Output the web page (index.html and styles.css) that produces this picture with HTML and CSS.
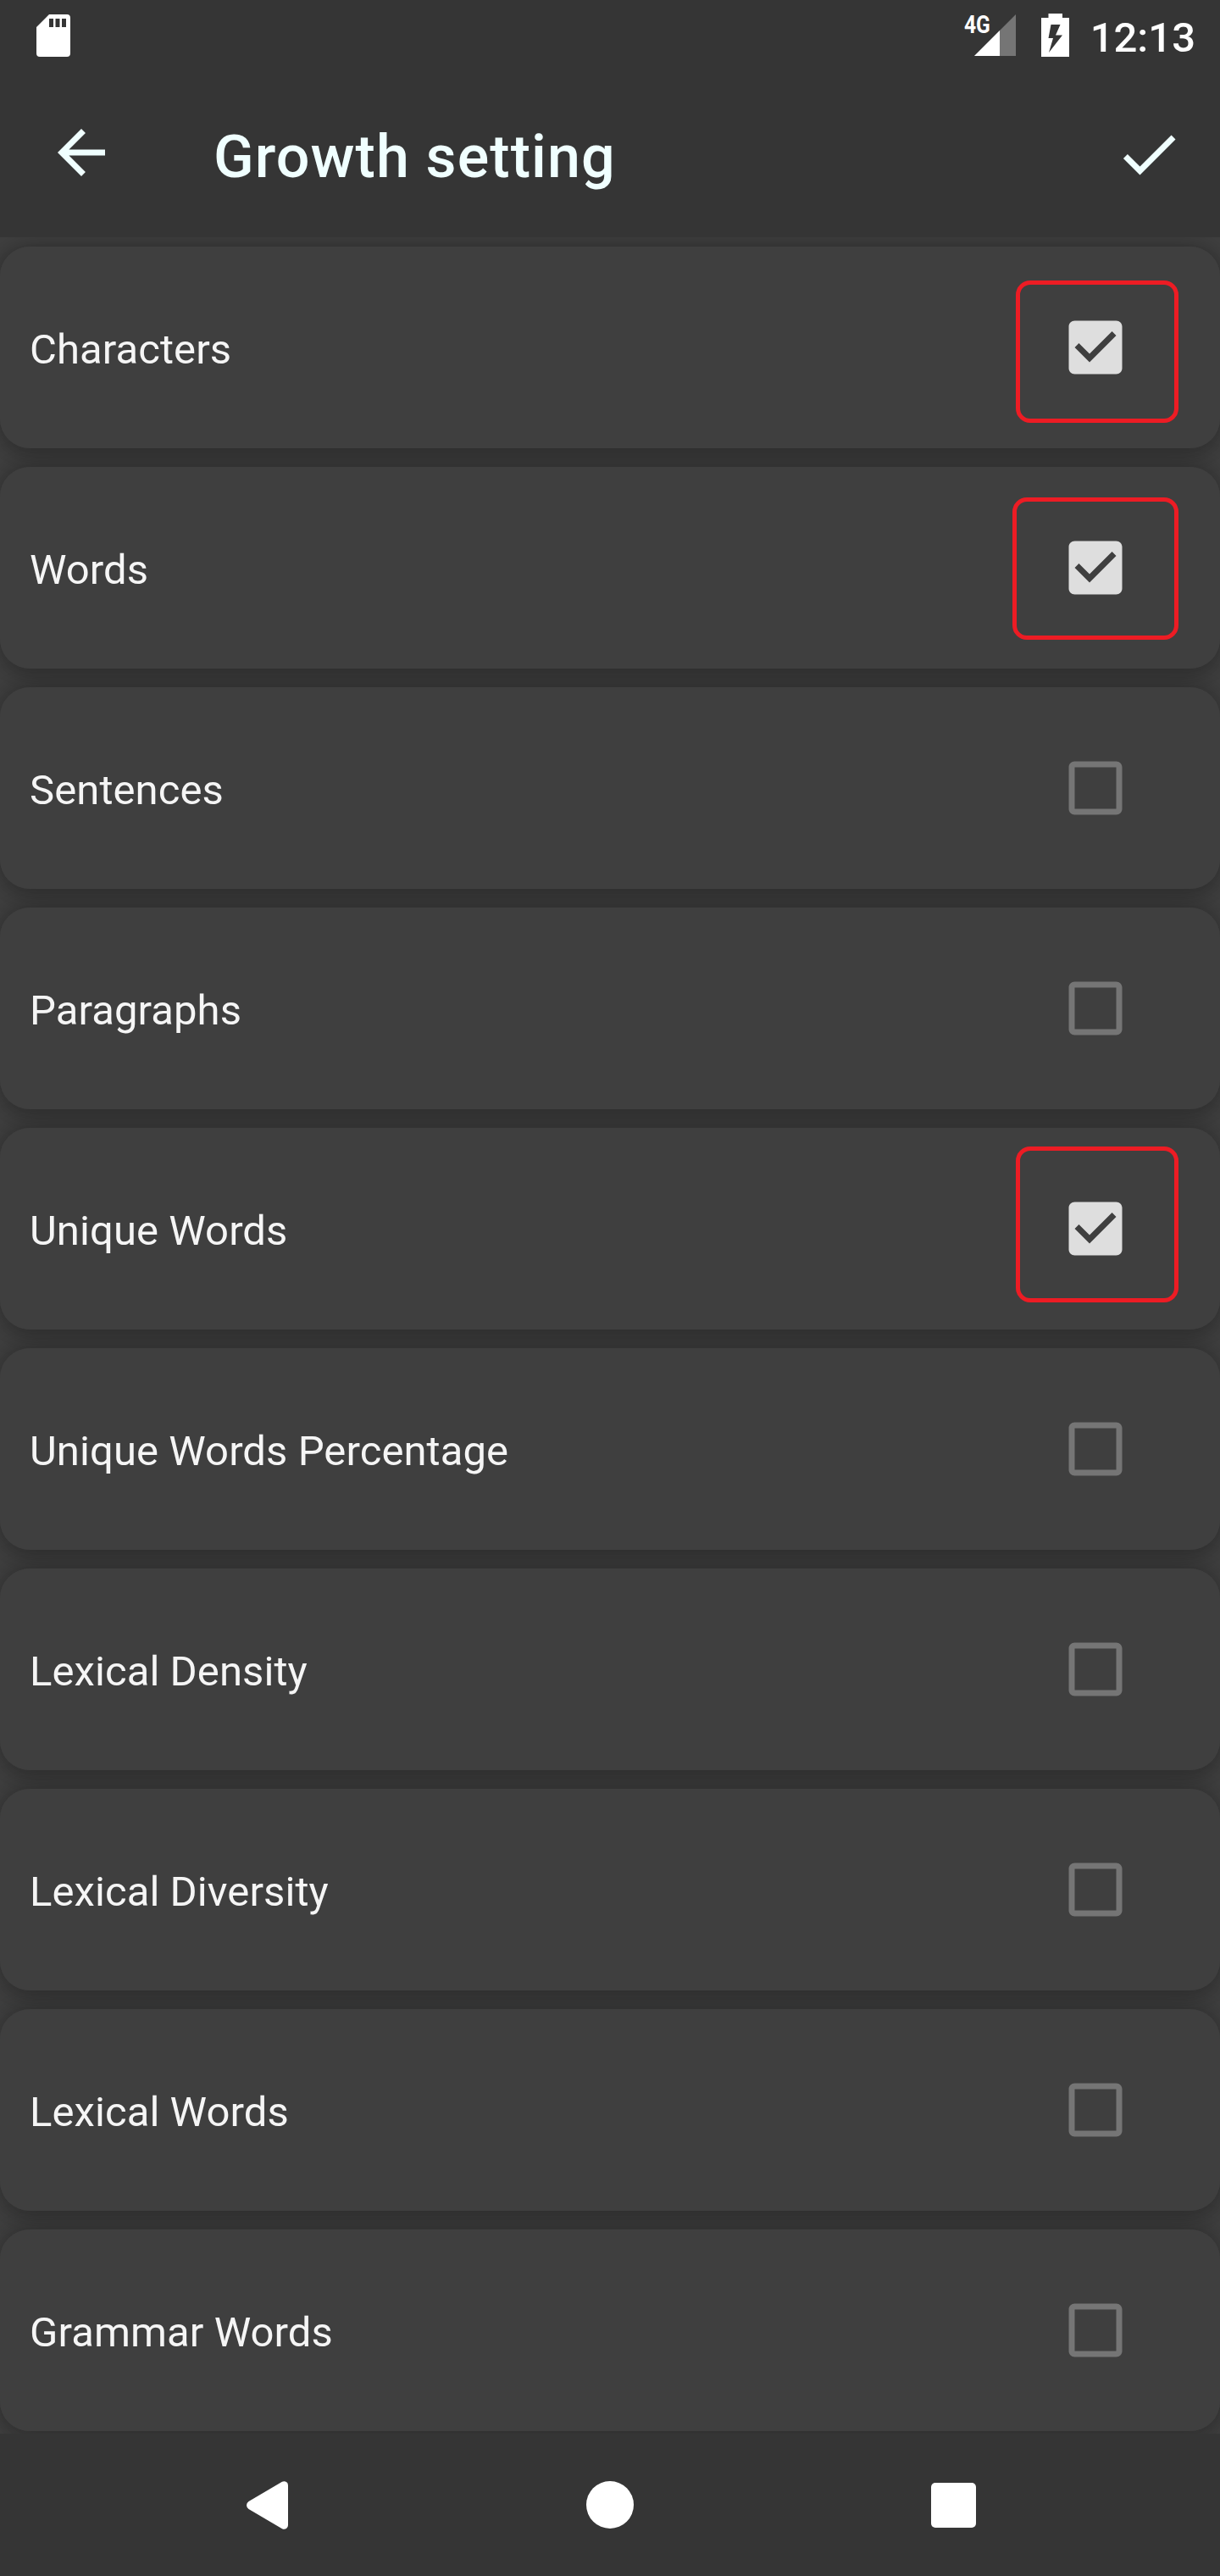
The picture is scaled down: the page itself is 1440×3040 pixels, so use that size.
FILE: index.html
```
<!DOCTYPE html>
<html lang="en">
<head>
<meta charset="utf-8">
<title>Growth setting</title>
<link rel="stylesheet" href="styles.css">
</head>
<body>
<svg class="defs" width="0" height="0" aria-hidden="true">
  <symbol id="on" viewBox="0 0 24 24"><path d="M19 3H5c-1.11 0-2 .9-2 2v14c0 1.1.89 2 2 2h14c1.11 0 2-.9 2-2V5c0-1.1-.89-2-2-2zm-9 14l-5-5 1.41-1.41L10 14.17l7.59-7.59L19 8l-9 9z"/></symbol>
  <symbol id="off" viewBox="0 0 24 24"><path d="M19 5v14H5V5h14m0-2H5c-1.1 0-2 .9-2 2v14c0 1.1.9 2 2 2h14c1.1 0 2-.9 2-2V5c0-1.1-.9-2-2-2z"/></symbol>
</svg>
<div class="screen">
  <div class="status">
    <svg class="sd" viewBox="0 0 40 50"><path fill-rule="evenodd" d="M15 0H36Q40 0 40 4V46Q40 50 36 50H4Q0 50 0 46V15ZM15 5V15H20V5ZM22.500 5V15H27.500V5ZM30 5V15H35V5Z"/></svg>
    <div class="signal">
      <span class="net">4G</span>
      <svg class="bars" viewBox="0 0 49 49"><path class="dim" d="M49 0V49H0Z"/><path d="M30 19V49H0Z"/></svg>
    </div>
    <svg class="battery" viewBox="0 0 33 51"><path fill-rule="evenodd" d="M8.500 0H25V5H33V51H0V5H8.500ZM11.500 13L8.500 29H14L9 46L25 25.500H17L22.500 13Z"/></svg>
    <span class="clock">12:13</span>
  </div>
  <header class="bar">
    <svg class="icon" viewBox="0 0 24 24"><path d="M20 11H7.830l5.590-5.590L12 4l-8 8 8 8 1.410-1.410L7.830 13H20v-2z"/></svg>
    <h1 class="title">Growth setting</h1>
    <svg class="icon done" viewBox="0 0 24 24"><path d="M9 16.170L4.830 12l-1.420 1.410L9 19 21 7l-1.410-1.410z"/></svg>
  </header>
  <main class="list">
    <div class="card"><span class="label">Characters</span><svg class="box on"><use href="#on"/></svg><i class="mark first"></i></div>
    <div class="card"><span class="label">Words</span><svg class="box on"><use href="#on"/></svg><i class="mark second"></i></div>
    <div class="card"><span class="label">Sentences</span><svg class="box"><use href="#off"/></svg></div>
    <div class="card"><span class="label">Paragraphs</span><svg class="box"><use href="#off"/></svg></div>
    <div class="card"><span class="label">Unique Words</span><svg class="box on"><use href="#on"/></svg><i class="mark third"></i></div>
    <div class="card"><span class="label">Unique Words Percentage</span><svg class="box"><use href="#off"/></svg></div>
    <div class="card"><span class="label">Lexical Density</span><svg class="box"><use href="#off"/></svg></div>
    <div class="card"><span class="label">Lexical Diversity</span><svg class="box"><use href="#off"/></svg></div>
    <div class="card"><span class="label">Lexical Words</span><svg class="box"><use href="#off"/></svg></div>
    <div class="card"><span class="label">Grammar Words</span><svg class="box"><use href="#off"/></svg></div>
  </main>
  <nav class="nav">
    <svg class="back" viewBox="0 0 49 57"><path d="M42 .8Q44.500-.5 47 1Q49 2.200 49 5V52Q49 54.800 47 56Q44.500 57.500 42 56.200L2.500 33Q0 31.200 0 28.500Q0 25.800 2.500 24Z"/></svg>
    <svg class="home" viewBox="0 0 56 56"><circle cx="28" cy="28" r="28"/></svg>
    <svg class="recent" viewBox="0 0 53 53"><rect width="53" height="53" rx="5"/></svg>
  </nav>
</div>
</body>
</html>
```
FILE: styles.css
```
* { box-sizing: border-box; }
body { margin: 0; background: #353535; font-family: Roboto, "Noto Sans", sans-serif; }
svg { display: block; flex: none; }
.defs { position: absolute; }
.screen { width: 1440px; height: 3040px; display: flex; flex-direction: column; overflow: hidden; }
.status { height: 84px; flex: none; display: flex; align-items: flex-start; padding: 16px 29px 0 43px; fill: #fff; color: #fff; }
.sd { width: 40px; height: 50px; margin-top: 1px; }
.signal { display: flex; align-items: flex-start; margin-left: auto; margin-top: 1px; }
.net { width: 31px; margin-right: -19px; font-size: 30px; line-height: 24px; font-weight: 700; transform: scaleX(.82); transform-origin: left; white-space: nowrap; }
.bars { width: 49px; height: 49px; }
.dim { fill: #757575; }
.battery { width: 33px; height: 51px; margin-left: 30px; }
.clock { margin-left: 25px; font-size: 49px; line-height: 57px; font-weight: 500; }
.bar { height: 196px; flex: none; display: flex; align-items: flex-start; padding: 54px 42px 0 54px; background: #353535; fill: #f0ffff; color: #f0ffff; }
.icon { width: 84px; height: 84px; }
.done { margin-top: 2px; }
.title { margin: 6px auto 0 114px; font-size: 70px; line-height: 82px; font-weight: 500; letter-spacing: 1.1px; }
.list { height: 2592px; flex: none; display: flex; flex-direction: column; gap: 22px; padding-top: 11px; background: #404040; overflow: hidden; isolation: isolate; }
.card { position: relative; height: 238px; flex: none; display: flex; align-items: center; justify-content: space-between; padding: 0 105px 0 35px; border-radius: 35px; background: #3f3f3f; }
/* Shadows sit behind every card so neighbours are not darkened. */
.card::before { content: ""; position: absolute; inset: 0; z-index: -1; border-radius: inherit; box-shadow: 0 0 32px rgba(0,0,0,.34), 0 12px 20px rgba(0,0,0,.07); }
.label { padding-top: 6px; font-size: 49px; line-height: 58px; letter-spacing: .08px; color: #f5f5f5; white-space: nowrap; }
.box { width: 84px; height: 84px; fill: #757575; }
.on { fill: #dedede; }
.mark { position: absolute; right: 49px; width: 192px; border: 5px solid #ed1c24; border-radius: 17px; }
.first { top: 40px; height: 168px; }
.second { top: 36px; width: 196px; height: 168px; }
.third { top: 22px; height: 184px; }
.nav { flex: 1; display: flex; align-items: center; justify-content: space-between; padding: 0 288px 0 291px; background: #353535; fill: #fff; }
.back { width: 49px; height: 57px; }
.home { width: 56px; height: 56px; }
.recent { width: 53px; height: 53px; }
```
